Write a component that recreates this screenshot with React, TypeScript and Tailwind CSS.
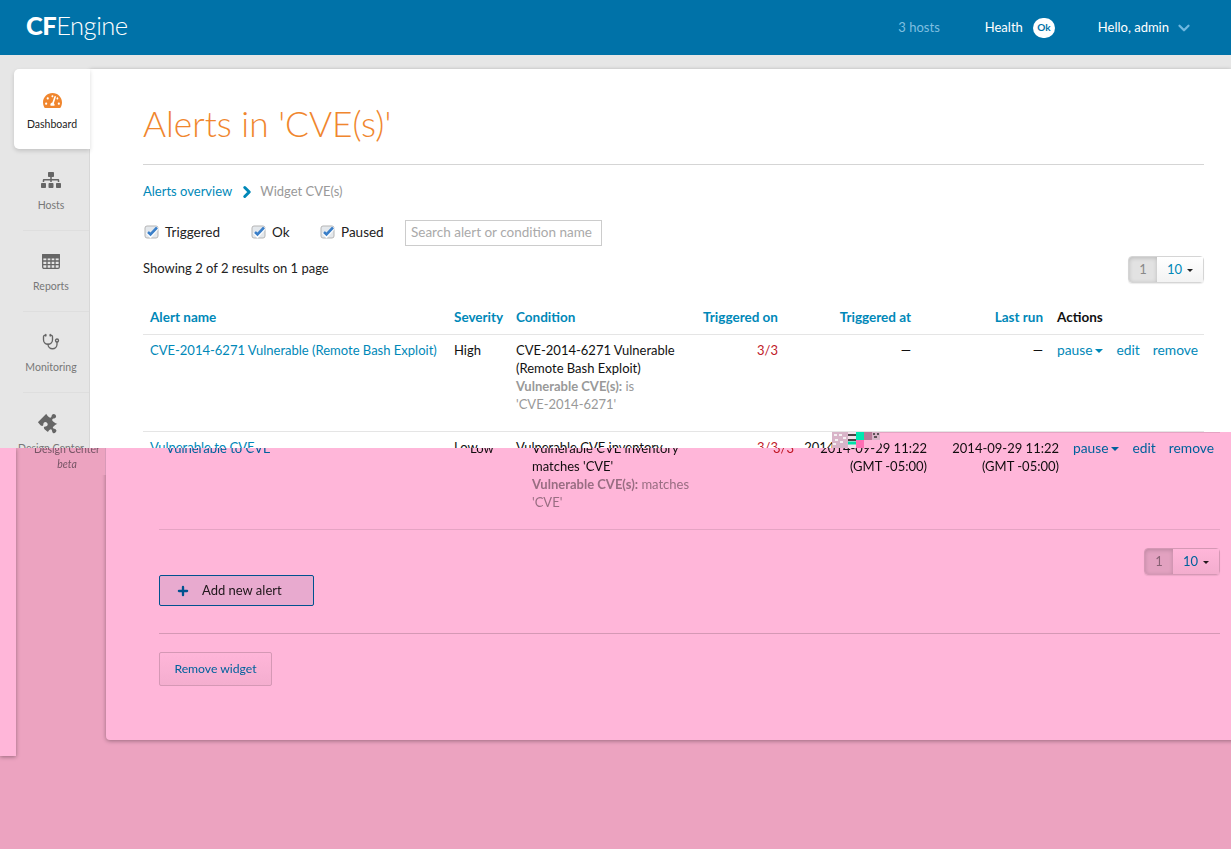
import type { ReactNode } from 'react';
import { FaPuzzlePiece, FaSitemap, FaTachometerAlt } from 'react-icons/fa';
import { ChevronDown, ChevronRight, Plus, Stethoscope } from 'lucide-react';

const FONT = 'font-[Lato,sans-serif]';

function Checkbox({ label, className }: { label: string; className?: string }) {
  return (
    <label className={`flex items-center pb-[2px] ${className ?? ''}`}>
      <svg width="16" height="16" viewBox="0 0 16 16" className="mr-[5px]">
        <rect x="1" y="2" width="13" height="12" rx="2" fill="#e4e8ec" stroke="#b5b5b5" />
        <path d="M3.5 8 L6.5 11.5 L13.5 3.5" fill="none" stroke="#ffffff" strokeWidth="4" />
        <path d="M4 8 L6.5 10.5 L13 3.5" fill="none" stroke="#3b7fc8" strokeWidth="2.6" />
      </svg>
      <span className="text-[13.5px] text-[#222]">{label}</span>
    </label>
  );
}

function Pager() {
  return (
    <div className="flex h-[27px] w-[76px] rounded-[4px] border border-[#d5d5d5] text-[13px] shadow-[0_1px_1px_rgba(0,0,0,0.08)]">
      <span className="flex w-[28px] items-center justify-center rounded-l-[3px] bg-[#e2e2e2] text-[#888] shadow-[inset_0_1px_4px_rgba(0,0,0,0.18)]">
        1
      </span>
      <span className="flex flex-1 items-center justify-center gap-[5px] bg-gradient-to-b from-white to-[#f3f3f3] text-[#0088b8]">
        10
        <span className="mt-[1px] h-0 w-0 border-x-[3px] border-t-[3px] border-x-transparent border-t-[#222]" />
      </span>
    </div>
  );
}

function SideItem({ icon, label, sub, divider = true }: { icon: ReactNode; label: string; sub?: string; divider?: boolean }) {
  return (
    <div className="flex h-[81px] flex-col">
      <div className="flex flex-1 flex-col items-center pl-[13px] pt-[20px]">
        <div className="flex h-[20px] items-center text-[#666]">{icon}</div>
        <div className="mt-[6px] whitespace-nowrap text-[10.5px] leading-[18px] text-[#777]">{label}</div>
        {sub && <div className="text-[10.5px] italic leading-[12px] text-[#777]">{sub}</div>}
      </div>
      {divider && <div className="ml-[23px] border-b border-[#dedede]" />}
    </div>
  );
}

function GridIcon() {
  return (
    <svg width="18" height="15" viewBox="0 0 18 15" fill="none" stroke="currentColor" strokeWidth="1.3">
      <rect x="0.7" y="0.7" width="16.6" height="13.6" rx="1.2" />
      <path d="M0.7 3.6h16.6M0.7 7h16.6M0.7 10.6h16.6M5 3.6v10.7M9 3.6v10.7M13 3.6v10.7" />
      <rect x="0.7" y="0.7" width="16.6" height="2.9" fill="currentColor" />
    </svg>
  );
}

function Actions() {
  return (
    <div className="flex items-center text-[13.8px] text-[#0088b8]">
      <span>pause</span>
      <span className="ml-[2px] mt-[1px] h-0 w-0 border-x-[4px] border-t-[4px] border-x-transparent border-t-[#0088b8]" />
      <span className="ml-[14px]">edit</span>
      <span className="ml-[13px]">remove</span>
    </div>
  );
}

function Page({ toneClass }: { toneClass: string }) {
  return (
    <div className={`w-[1231px] ${toneClass} ${FONT}`}>
      {/* Top bar */}
      <header className="flex h-[55px] items-center bg-[#0072a8] pl-[26px] pr-[38px] text-white">
        <div className="pb-[3px] text-[25.5px] leading-none tracking-[-0.5px]">
          <span className="font-black">CF</span>
          <span className="font-light">Engine</span>
        </div>
        <span className="ml-auto text-[13px] text-[#7fbfe0]">3 hosts</span>
        <span className="ml-[45px] text-[13px]">Health</span>
        <span className="ml-[10px] flex h-[20px] w-[22px] items-center justify-center rounded-full bg-white text-[10px] font-bold text-[#0072a8]">
          Ok
        </span>
        <span className="ml-[43px] text-[13px]">Hello, admin</span>
        <ChevronDown size={18} strokeWidth={3} className="ml-[6px] text-[#6fb8e0]" />
      </header>

      <div className="flex h-[794px] items-start pt-[14px]">
        {/* Sidebar */}
        <nav className={`relative z-10 h-[405px] w-[90px] shrink-0 border-r border-[#d8d8d8] ${toneClass}`}>
          <div className="mb-[1px] ml-[14px] mr-[-1px] flex h-[80px] flex-col items-center rounded-l-[5px] bg-white pt-[22px] shadow-[0_2px_4px_rgba(0,0,0,0.15)]">
            <FaTachometerAlt size={19} className="text-[#f0862e]" />
            <div className="mt-[5px] text-[10.5px] leading-[18px] text-[#222]">Dashboard</div>
          </div>
          <SideItem icon={<FaSitemap size={20} />} label="Hosts" />
          <SideItem icon={<GridIcon />} label="Reports" />
          <SideItem icon={<Stethoscope size={18} strokeWidth={1.8} />} label="Monitoring" />
          <SideItem icon={<FaPuzzlePiece size={20} className="rotate-45" />} label="Design Center" sub="beta" divider={false} />
        </nav>

        {/* Main card */}
        <main className="h-[670px] flex-1 rounded-bl-[4px] bg-white pl-[53px] pr-[27px] pt-[35px] shadow-[0_1px_4px_rgba(0,0,0,0.35)]">
          <h1 className="h-[40px] text-[35.3px] font-light leading-[40px] text-[#f0862e]">Alerts in 'CVE(s)'</h1>
          <div className="mt-[20px] border-t border-[#d5d5d5]" />

          <div className="mt-[17px] flex h-[20px] items-center text-[13px]">
            <span className="text-[#0088b8]">Alerts overview</span>
            <ChevronRight size={18} strokeWidth={4} className="ml-[6px] text-[#0088b8]" />
            <span className="ml-[4px] text-[#999]">Widget CVE(s)</span>
          </div>

          <div className="mt-[18px] flex h-[26px] items-center pl-[1px]">
            <Checkbox label="Triggered" className="w-[107px]" />
            <Checkbox label="Ok" className="w-[69px]" />
            <Checkbox label="Paused" className="w-[85px]" />
            <input
              placeholder="Search alert or condition name"
              className="h-[26px] w-[197px] border border-[#ccc] px-[5px] pb-[2px] text-[13.5px] outline-none placeholder:text-[#aaa]"
            />
          </div>

          <div className="mt-[10px] flex h-[27px] items-start justify-between">
            <span className="mt-[2px] text-[13px] leading-[20px] text-[#222]">Showing 2 of 2 results on 1 page</span>
            <Pager />
          </div>

          <table className="mt-[25px] w-full table-fixed border-collapse text-[13px] leading-[18px] text-[#111]">
            <colgroup>
              <col className="w-[304px]" />
              <col className="w-[62px]" />
              <col className="w-[185px]" />
              <col className="w-[91px]" />
              <col className="w-[133px]" />
              <col className="w-[132px]" />
              <col />
            </colgroup>
            <thead>
              <tr className="h-[25px] border-b border-[#e5e5e5] text-[13.5px] font-bold text-[#0088b8]">
                <th className="px-[7px] pb-[8px] text-left font-bold">Alert name</th>
                <th className="px-[7px] pb-[8px] text-left font-bold">Severity</th>
                <th className="px-[7px] pb-[8px] text-left font-bold">Condition</th>
                <th className="px-[7px] pb-[8px] text-right font-bold">Triggered on</th>
                <th className="px-[7px] pb-[8px] text-right font-bold">Triggered at</th>
                <th className="px-[7px] pb-[8px] text-right font-bold">Last run</th>
                <th className="px-[7px] pb-[8px] text-left font-bold text-[#111]">Actions</th>
              </tr>
            </thead>
            <tbody className="align-top">
              <tr className="h-[97px] border-b border-[#e5e5e5]">
                <td className="px-[7px] pt-[6px] text-[#0088b8]">CVE-2014-6271 Vulnerable (Remote Bash Exploit)</td>
                <td className="px-[7px] pt-[6px]">High</td>
                <td className="px-[7px] pt-[6px]">
                  CVE-2014-6271 Vulnerable
                  <br />
                  (Remote Bash Exploit)
                  <div className="text-[#999]">
                    <b>Vulnerable CVE(s):</b> is
                    <br />
                    'CVE-2014-6271'
                  </div>
                </td>
                <td className="px-[7px] pt-[6px] text-right text-[#c0202a]">3/3</td>
                <td className="px-[7px] pt-[6px] text-right">—</td>
                <td className="px-[7px] pt-[6px] text-right">—</td>
                <td className="px-[7px] pt-[6px]"><Actions /></td>
              </tr>
              <tr className="h-[97px] border-b border-[#e5e5e5]">
                <td className="px-[7px] pt-[6px] text-[#0088b8]">Vulnerable to CVE</td>
                <td className="px-[7px] pt-[6px]">Low</td>
                <td className="px-[7px] pt-[6px]">
                  Vulnerable CVE inventory
                  <br />
                  matches 'CVE'
                  <div className="text-[#999]">
                    <b>Vulnerable CVE(s):</b> matches
                    <br />
                    'CVE'
                  </div>
                </td>
                <td className="px-[7px] pt-[6px] text-right text-[#c0202a]">3/3</td>
                <td className="px-[7px] pt-[6px] text-right">
                  2014-09-29 11:22
                  <br />
                  (GMT -05:00)
                </td>
                <td className="px-[7px] pt-[6px] text-right">
                  2014-09-29 11:22
                  <br />
                  (GMT -05:00)
                </td>
                <td className="px-[7px] pt-[6px]"><Actions /></td>
              </tr>
            </tbody>
          </table>

          <div className="mt-[18px] flex justify-end">
            <Pager />
          </div>

          <button className="flex h-[31px] w-[155px] items-center rounded-[2px] border border-[#0072a8] bg-[#e8eef4] pl-[16px] text-[13px] text-[#222]">
            <Plus size={14} strokeWidth={4} className="text-[#0072a8]" />
            <span className="ml-[12px]">Add new alert</span>
          </button>

          <div className="mt-[27px] border-t border-[#d5d5d5]" />

          <button className="mt-[18px] flex h-[34px] w-[113px] items-center justify-center rounded-[2px] border border-[#d5d5d5] bg-gradient-to-b from-white to-[#f4f4f4] text-[12.2px] text-[#0088b8]">
            Remove widget
          </button>
        </main>
      </div>
    </div>
  );
}

// garbled pixels sitting right on the seam of the broken capture
function Glitch() {
  return (
    <svg width="48" height="16" viewBox="0 0 48 16" className="absolute left-[832px] top-[432px]">
      <rect width="16" height="16" fill="#d8b4c8" />
      <path d="M2 3h3M7 3h3M11 6h3M3 8h3M8 10h3M1 12h3" stroke="#f4f0f2" strokeWidth="2" />
      <rect x="16" width="8" height="16" fill="#f4e0ea" />
      <path d="M16 3h8M16 8h8" stroke="#111" strokeWidth="1.5" />
      <path d="M16 11h8" stroke="#00e0a8" strokeWidth="3" />
      <rect x="24" width="8" height="8" fill="#00e8b0" />
      <rect x="24" y="8" width="8" height="8" fill="#ff6eb4" />
      <rect x="32" width="8" height="8" fill="#b87a98" />
      <rect x="32" y="8" width="16" height="8" fill="#ffb6d9" />
      <rect x="40" width="8" height="8" fill="#d8b4c8" />
      <path d="M41 2h2M45 2h2M42 5h3" stroke="#333" strokeWidth="1.5" />
    </svg>
  );
}

export default function App() {
  return (
    <div className="h-[849px] w-[1231px] overflow-hidden">
      <div className="relative h-[448px] overflow-hidden">
        <Page toneClass="bg-[#e6e6e6]" />
        <Glitch />
      </div>
      {/* lower half of the capture: slipped 16px sideways and tinted, starts one tile higher right of the garble */}
      <div className="relative -mt-[16px] h-[417px] overflow-hidden bg-[#ece4e2] [clip-path:polygon(0_16px,880px_16px,880px_0,100%_0,100%_100%,0_100%)]">
        <div className="isolate -mt-[431px] ml-[16px]">
          <Page toneClass="bg-[#ece4e2]" />
        </div>
        <div className="absolute left-0 top-[16px] h-[308px] w-[16px] bg-white shadow-[0_1px_4px_rgba(0,0,0,0.35)]" />
        <div className="absolute inset-0 bg-[#ffb6d9] mix-blend-multiply" />
      </div>
    </div>
  );
}
